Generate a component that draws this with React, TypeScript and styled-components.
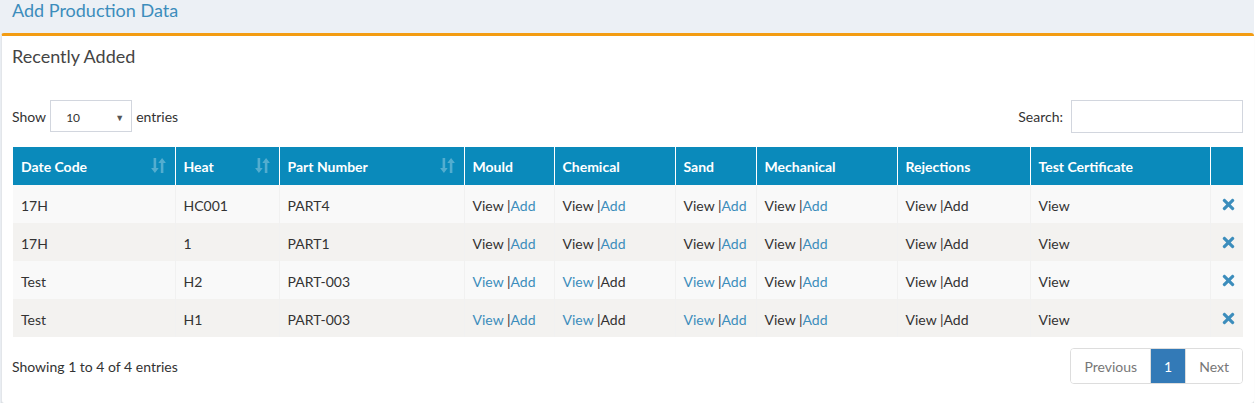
import React from 'react'
import styled, { createGlobalStyle } from 'styled-components'
import { FaTimes } from 'react-icons/fa'

const GlobalStyle = createGlobalStyle`
  html, body {
    margin: 0;
    padding: 0;
    background: #fff;
    font-family: Lato, "Liberation Sans", sans-serif;
    font-size: 14px;
    color: #333;
  }
`

const Page = styled.div`
  width: 1254px;
  background: #ecf0f5;
`

const PageHeader = styled.div`
  height: 33px;
  padding: 0 12px;
  box-sizing: border-box;
  font-size: 18px;
  line-height: 21px;
  color: #3c8dbc;
`

const Box = styled.div`
  margin-left: 1px;
  background: #fff;
  border-top: 3px solid #f39c12;
  border-left: 1px solid #e3e6ea;
  border-radius: 3px;
  box-shadow: 0 1px 1px rgba(0, 0, 0, 0.12);
  height: 370px;
  box-sizing: border-box;
  display: flex;
  flex-direction: column;
`

const BoxTitle = styled.h3`
  margin: 0;
  padding: 8px 10px 0;
  font-size: 18px;
  font-weight: 400;
  line-height: 24px;
  color: #444;
`

const BoxBody = styled.div`
  padding: 32px 11px 0 10px;
  display: flex;
  flex-direction: column;
`

const Controls = styled.div`
  display: flex;
  justify-content: space-between;
  align-items: center;
  height: 32px;
`

const Label = styled.label`
  display: flex;
  align-items: center;
  gap: 4px;
`

const FakeSelect = styled.div`
  width: 82px;
  height: 32px;
  box-sizing: border-box;
  border: 1px solid #d2d6de;
  display: flex;
  align-items: center;
  justify-content: space-between;
  padding: 2px 7px 0 15px;
  font-size: 12px;
`

const Caret = styled.span`
  font-size: 9px;
  color: #555;
`

const SearchInput = styled.input`
  width: 172px;
  height: 33px;
  box-sizing: border-box;
  border: 1px solid #d2d6de;
  margin-left: 4px;
  outline: none;
`

const Table = styled.table`
  margin-top: 15px;
  margin-left: 1px;
  width: 1230px;
  table-layout: fixed;
  border-collapse: collapse;
`

const Col = styled.col<{ $w: number }>`
  width: ${p => p.$w}px;
`

const Th = styled.th`
  position: relative;
  background: #0a8abb;
  color: #fff;
  font-weight: 700;
  text-align: left;
  height: 38px;
  padding: 1px 8px 0;
  box-sizing: border-box;
  border-left: 1px solid #fff;
  &:first-child {
    border-left: none;
  }
`

const SortIcon = styled.svg`
  position: absolute;
  right: 9px;
  top: 10px;
`

const Tr = styled.tr<{ $odd: boolean }>`
  background: ${p => (p.$odd ? '#f9f9f9' : '#f3f2f0')};
`

const Td = styled.td`
  height: 38px;
  padding: 3px 8px 0;
  box-sizing: border-box;
  border: 1px solid #f1f1f1;
  border-top: none;
  border-bottom: none;
  &:first-child {
    border-left: none;
  }
  &:last-child {
    border-right: none;
    text-align: center;
  }
`

const Link = styled.span<{ $link: boolean }>`
  color: ${p => (p.$link ? '#3c8dbc' : '#333')};
`

const Remove = styled.span`
  color: #3c8dbc;
  display: inline-flex;
  font-size: 17px;
  margin-left: 1px;
`

const Footer = styled.div`
  display: flex;
  justify-content: space-between;
  align-items: center;
  margin-top: 11px;
`

const Pager = styled.div`
  display: flex;
  border: 1px solid #ddd;
  border-radius: 4px;
  overflow: hidden;
  height: 36px;
  box-sizing: border-box;
`

const PageBtn = styled.span<{ $active?: boolean }>`
  display: flex;
  align-items: center;
  padding: 1px 13px 0;
  color: ${p => (p.$active ? '#fff' : '#777')};
  background: ${p => (p.$active ? '#337ab7' : '#fff')};
  & + & {
    border-left: 1px solid #ddd;
  }
`

const cols = [162, 104, 185, 90, 121, 81, 141, 133, 180, 33]
const heads = ['Date Code', 'Heat', 'Part Number', 'Mould', 'Chemical', 'Sand', 'Mechanical', 'Rejections', 'Test Certificate', '']

type Pair = [boolean, boolean]
type Row = { date: string; heat: string; part: string; links: Pair[] }

const firstLinks: Pair[] = [[false, true], [false, true], [false, true], [false, true], [false, false]]
const laterLinks: Pair[] = [[true, true], [true, false], [true, true], [false, true], [false, false]]

const rows: Row[] = [
  { date: '17H', heat: 'HC001', part: 'PART4', links: firstLinks },
  { date: '17H', heat: '1', part: 'PART1', links: firstLinks },
  { date: 'Test', heat: 'H2', part: 'PART-003', links: laterLinks },
  { date: 'Test', heat: 'H1', part: 'PART-003', links: laterLinks },
]

const Sort = () => (
  <SortIcon width="15" height="17" viewBox="0 0 15 17">
    <path d="M2.6 1h2.6v10h2.5L3.9 16 0.1 11h2.5z" fill="rgba(255,255,255,0.3)" />
    <path d="M9.8 16h2.6V6h2.5L11.1 1 7.3 6h2.5z" fill="rgba(255,255,255,0.3)" />
  </SortIcon>
)

const App = () => {
  return (
    <Page>
      <GlobalStyle />
      <PageHeader>Add Production Data</PageHeader>
      <Box>
        <BoxTitle>Recently Added</BoxTitle>
        <BoxBody>
          <Controls>
            <Label>
              Show
              <FakeSelect>
                10 <Caret>▼</Caret>
              </FakeSelect>
              entries
            </Label>
            <Label>
              Search:
              <SearchInput type="search" />
            </Label>
          </Controls>
          <Table>
            <colgroup>
              {cols.map((w, i) => (
                <Col key={i} $w={w} />
              ))}
            </colgroup>
            <thead>
              <tr>
                {heads.map((h, i) => (
                  <Th key={i}>
                    {h}
                    {i < 3 && <Sort />}
                  </Th>
                ))}
              </tr>
            </thead>
            <tbody>
              {rows.map((r, i) => (
                <Tr key={i} $odd={i % 2 === 0}>
                  <Td>{r.date}</Td>
                  <Td>{r.heat}</Td>
                  <Td>{r.part}</Td>
                  {r.links.map(([v, a], j) => (
                    <Td key={j}>
                      <Link $link={v}>View</Link> |<Link $link={a}>Add</Link>
                    </Td>
                  ))}
                  <Td>View</Td>
                  <Td>
                    <Remove>
                      <FaTimes />
                    </Remove>
                  </Td>
                </Tr>
              ))}
            </tbody>
          </Table>
          <Footer>
            <span>Showing 1 to 4 of 4 entries</span>
            <Pager>
              <PageBtn>Previous</PageBtn>
              <PageBtn $active>1</PageBtn>
              <PageBtn>Next</PageBtn>
            </Pager>
          </Footer>
        </BoxBody>
      </Box>
    </Page>
  )
}

export default App
